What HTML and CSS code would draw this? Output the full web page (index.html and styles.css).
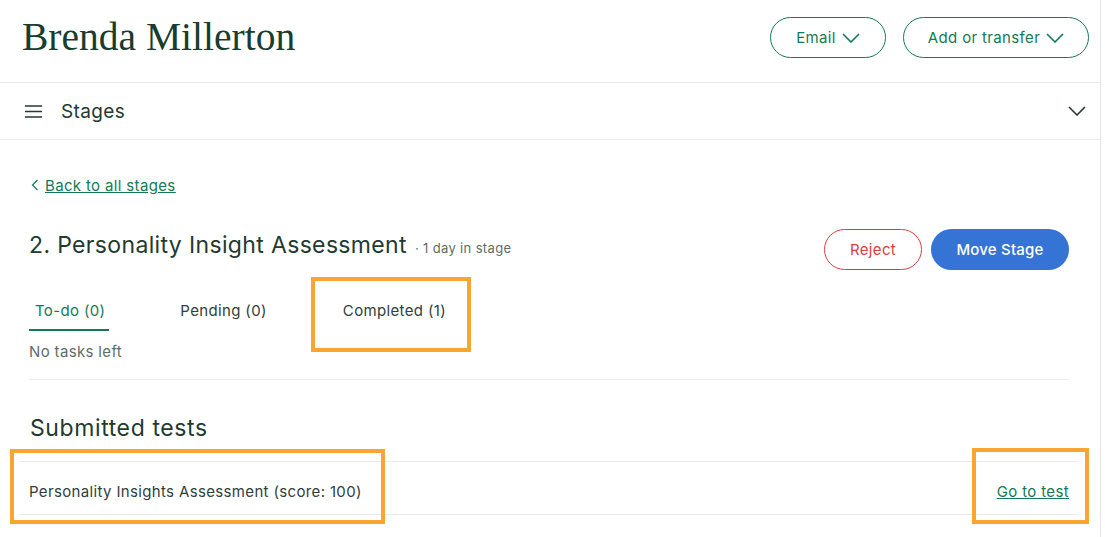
FILE: index.html
```html
<!DOCTYPE html>
<html lang="en">
<head>
    <meta charset="UTF-8">
    <meta name="viewport" content="width=device-width, initial-scale=1.0">
    <title>Brenda Millerton</title>
    <link rel="stylesheet" href="styles.css">
</head>
<body>
    <div class="page">
        <div class="header">
            <h1>Brenda Millerton</h1>
            <div class="headerActions">
                <button class="outlineBtn">Email
                    <svg width="18" height="10" viewBox="0 0 18 10"><path d="M1 1l8 8 8-8" fill="none" stroke="currentColor" stroke-width="1.6"/></svg>
                </button>
                <button class="outlineBtn wide">Add or transfer
                    <svg width="18" height="10" viewBox="0 0 18 10"><path d="M1 1l8 8 8-8" fill="none" stroke="currentColor" stroke-width="1.6"/></svg>
                </button>
            </div>
        </div>

        <div class="stagesBar">
            <svg class="menuIcon" width="17" height="13" viewBox="0 0 17 13"><path d="M0 1h17M0 6.5h17M0 12h17" stroke="currentColor" stroke-width="1.6"/></svg>
            <span class="stagesLabel">Stages</span>
            <svg class="toggleIcon" width="18" height="10" viewBox="0 0 18 10"><path d="M1 1l8 8 8-8" fill="none" stroke="currentColor" stroke-width="1.6"/></svg>
        </div>

        <div class="content">
            <a class="backLink" href="#">
                <svg width="8" height="12" viewBox="0 0 8 12"><path d="M6.5 1L1.5 6l5 5" fill="none" stroke="currentColor" stroke-width="1.2"/></svg>
                <span>Back to all stages</span>
            </a>

            <div class="stageHead">
                <div class="stageTitle">
                    <h2>2. Personality Insight Assessment</h2>
                    <span class="stageMeta">· 1 day in stage</span>
                </div>
                <div class="stageActions">
                    <button class="rejectBtn">Reject</button>
                    <button class="moveBtn">Move Stage</button>
                </div>
            </div>

            <div class="tabs">
                <div class="tab active">To-do (0)</div>
                <div class="tab">Pending (0)</div>
                <div class="tab">Completed (1)</div>
            </div>
            <p class="emptyText">No tasks left</p>

            <h3>Submitted tests</h3>
            <div class="testRow">
                <span>Personality Insights Assessment (score: 100)</span>
                <a href="#" class="testLink">Go to test</a>
            </div>
        </div>

        <!-- annotation boxes -->
        <div class="mark markTab"></div>
        <div class="mark markRow"></div>
        <div class="mark markLink"></div>
    </div>
</body>
</html>
```

FILE: styles.css
```css
body {
    margin: 0;
    padding: 0;
    background-color: #fff;
    font-family: Inter, "Noto Sans", sans-serif;
    letter-spacing: 0.35px;
    color: #24392f;
}

.page {
    position: relative;
    width: 1100px;
    min-height: 537px;
    border-right: 1px solid #e6e6e6;
}

.header {
    height: 82px;
    border-bottom: 1px solid #ececec;
    display: flex;
    align-items: center;
    justify-content: space-between;
    padding: 0 11px 0 22px;
}

h1 {
    margin: 0 0 8px 0;
    font-family: "Liberation Serif", serif;
    font-weight: normal;
    font-size: 39.5px;
    color: #173d2e;
    letter-spacing: 0;
}

.headerActions {
    display: flex;
    gap: 17px;
    margin-top: -7px;
}

.outlineBtn {
    height: 41px;
    padding: 0;
    border: 1px solid #137a55;
    border-radius: 21px;
    background: #fff;
    color: #137a55;
    font-family: inherit;
    letter-spacing: inherit;
    font-size: 15px;
    display: flex;
    align-items: center;
    gap: 6px;
    width: 116px;
    justify-content: center;
}

.outlineBtn.wide {
    width: 186px;
}

.stagesBar {
    height: 56px;
    border-bottom: 1px solid #ececec;
    display: flex;
    align-items: center;
    padding: 0 14px 0 25px;
    color: #24392f;
}

.menuIcon {
    margin-right: 19px;
}

.stagesLabel {
    font-size: 19px;
    flex-grow: 1;
}

.content {
    padding: 35px 31px 0 29px;
}

.backLink {
    display: inline-flex;
    align-items: center;
    gap: 6px;
    color: #137a55;
    font-size: 15px;
    margin-left: 2px;
}

.backLink span {
    text-decoration: underline;
}

.stageHead {
    display: flex;
    justify-content: space-between;
    align-items: center;
    margin-top: 34px;
}

.stageTitle {
    display: flex;
    align-items: baseline;
    gap: 8px;
    margin-top: -10px;
}

h2 {
    margin: 0;
    font-weight: normal;
    font-size: 23px;
    color: #1f3a2f;
}

.stageMeta {
    font-size: 13px;
    color: #5e6e67;
}

.stageActions {
    display: flex;
    gap: 9px;
}

.rejectBtn {
    width: 98px;
    height: 41px;
    border: 1px solid #d9403a;
    border-radius: 21px;
    background: #fff;
    color: #d9403a;
    font-family: inherit;
    letter-spacing: inherit;
    font-size: 15px;
}

.moveBtn {
    width: 138px;
    height: 41px;
    border: none;
    border-radius: 21px;
    background: #3574d4;
    color: #fff;
    font-family: inherit;
    letter-spacing: 0.2px;
    font-size: 15px;
    font-weight: 500;
}

.tabs {
    display: flex;
    margin-top: 21px;
}

.tab {
    font-size: 15px;
    color: #2f4139;
    padding: 10px 4px 9px 6px;
    border-bottom: 2px solid transparent;
}

.tab:nth-child(2) {
    margin-left: 65px;
}

.tab:nth-child(3) {
    margin-left: 66px;
}

.tab.active {
    color: #137a55;
    border-bottom-color: #137a55;
}

.emptyText {
    margin: 11px 0 0 0;
    padding-bottom: 18px;
    border-bottom: 1px solid #ececec;
    font-size: 15px;
    color: #5e6e67;
}

h3 {
    margin: 34px 0 0 1px;
    font-weight: normal;
    font-size: 23px;
    letter-spacing: 0.6px;
    color: #1f3a2f;
}

.testRow {
    margin: 19px -9px 0 -9px;
    border-top: 1px solid #ececec;
    border-bottom: 1px solid #ececec;
    display: flex;
    align-items: center;
    justify-content: space-between;
    padding: 6px 9px 0 9px;
    box-sizing: border-box;
    height: 54px;
    font-size: 15px;
    color: #2f4139;
}

.testLink {
    color: #137a55;
    text-decoration: underline;
}

.mark {
    position: absolute;
    border: 4px solid #f9a531;
    box-sizing: border-box;
}

.markTab {
    left: 311px;
    top: 277px;
    width: 160px;
    height: 75px;
}

.markRow {
    left: 10px;
    top: 449px;
    width: 375px;
    height: 75px;
}

.markLink {
    left: 972px;
    top: 448px;
    width: 117px;
    height: 76px;
}
```
